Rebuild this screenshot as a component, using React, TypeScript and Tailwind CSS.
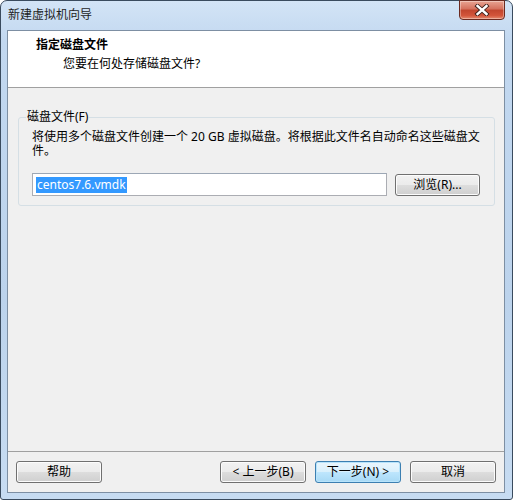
import React from "react";

const font = { fontFamily: '"Segoe UI", "Noto Sans", "Noto Sans CJK SC", sans-serif' };

function Btn({ children, def = false }: { children: React.ReactNode; def?: boolean }) {
  return (
    <div
      className={
        "h-[22px] w-[86px] rounded-[3px] border flex items-center justify-center text-[12px] text-black " +
        (def
          ? "border-[#3c7fb1] bg-[linear-gradient(to_bottom,#eaf6fd_0%,#d9f0fc_50%,#bee6fd_51%,#a7d9f5_100%)] shadow-[inset_0_0_0_1px_#b8e4fb]"
          : "border-[#707070] bg-[linear-gradient(to_bottom,#f2f2f2_0%,#ebebeb_50%,#dddddd_51%,#cfcfcf_100%)] shadow-[inset_0_0_0_1px_#fcfcfc]")
      }
    >
      {children}
    </div>
  );
}

export default function App() {
  return (
    <div style={font} className="w-[513px] h-[500px] overflow-hidden">
      <div className="w-[513px] h-[500px] flex flex-col border border-[#3a4b5e] rounded-t-[7px] rounded-b-[3px] bg-[linear-gradient(to_bottom,#d3e4f6_0%,#c2d8f0_8%,#bcd3ec_60%,#c7dcf2_100%)]">
        {/* title bar */}
        <div className="h-[29px] flex items-start shrink-0">
          <div className="pl-[7px] pt-[6px] text-[12px] leading-[16px] text-[#1e1e1e]">新建虚拟机向导</div>
          <div className="ml-auto mr-[7px] mt-[-1px] w-[46px] h-[20px] rounded-b-[4px] border border-[#6b2a20] bg-[linear-gradient(to_bottom,#e8a493_0%,#d4705c_45%,#c1452e_50%,#d2543a_80%,#e58a6f_100%)] flex items-center justify-center shadow-[inset_0_0_0_1px_rgba(255,255,255,0.35)]">
            <svg width="16" height="12" viewBox="0 0 16 12">
              <path d="M3.5 2 L12.5 10 M12.5 2 L3.5 10" stroke="#3b1f1a" strokeWidth="4.2" strokeLinecap="square" />
              <path d="M3.5 2 L12.5 10 M12.5 2 L3.5 10" stroke="#ffffff" strokeWidth="2.4" strokeLinecap="square" />
            </svg>
          </div>
        </div>
        {/* client */}
        <div className="ml-[6px] mr-[7px] h-[463px] flex flex-col bg-[#f0f0f0] border border-[#7d8fa3] shrink-0">
          <div className="h-[57px] bg-white border-b border-[#a0a0a0] shrink-0 pt-[6px]">
            <div className="pl-[28px] text-[12px] leading-[16px] font-bold text-black">指定磁盘文件</div>
            <div className="pl-[55px] pt-[3px] text-[12px] leading-[16px] text-black">您要在何处存储磁盘文件?</div>
          </div>
          <div className="px-[10px] pt-[23px]">
            <div className="relative border border-[#d5dfe5] rounded-[3px] mt-[6px] w-[477px] pl-[13px] pr-[13px] pt-[12px] pb-[9px]">
              <div className="absolute left-[7px] top-[-9px] px-[1px] bg-[#f0f0f0] text-[12px] leading-[16px] text-black">磁盘文件(F)</div>
              <div className="text-[12px] leading-[14px] text-black">
                将使用多个磁盘文件创建一个 20 GB 虚拟磁盘。将根据此文件名自动命名这些磁盘文件。
              </div>
              <div className="flex items-center mt-[15px]">
                <div className="w-[355px] h-[23px] bg-white border border-[#abadb3] border-t-[#9ca7b5] flex items-center pl-[3px]">
                  <span className="bg-[#3399ff] text-white text-[12px] leading-[16px] px-[1px]">centos7.6.vmdk</span>
                </div>
                <div className="ml-[8px]">
                  <div className="h-[22px] w-[85px] rounded-[3px] border border-[#707070] bg-[linear-gradient(to_bottom,#f2f2f2_0%,#ebebeb_50%,#dddddd_51%,#cfcfcf_100%)] shadow-[inset_0_0_0_1px_#fcfcfc] flex items-center justify-center text-[12px] text-black">
                    浏览(R)...
                  </div>
                </div>
              </div>
            </div>
          </div>
          <div className="flex-1" />
          <div className="h-px bg-[#a0a0a0] shrink-0" />
          <div className="h-[40px] shrink-0 flex items-start pt-[9px] pl-[8px] pr-[8px]">
            <Btn>帮助</Btn>
            <div className="flex-1" />
            <div className="flex gap-[9px]">
              <Btn>&lt; 上一步(B)</Btn>
              <Btn def>下一步(N) &gt;</Btn>
              <Btn>取消</Btn>
            </div>
          </div>
        </div>
      </div>
    </div>
  );
}
